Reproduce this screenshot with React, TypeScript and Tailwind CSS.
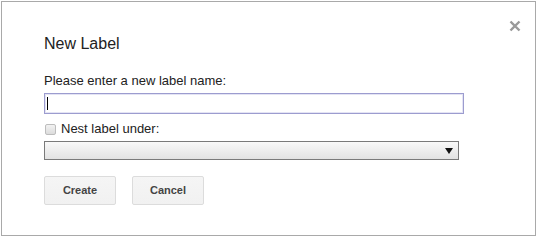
export default function App() {
  return (
    <div className="w-[538px] h-[237px] bg-white font-['Liberation_Sans',Arial,sans-serif] text-[#222]">
      <div className="relative ml-px mt-px w-[535px] h-[235px] border border-[#a9a9a9] bg-white pl-[42px] pt-[32px] flex flex-col">
        {/* close */}
        <button className="absolute right-[14px] top-[18px] w-[12px] h-[12px] flex items-center justify-center">
          <svg width="12" height="12" viewBox="0 0 12 12">
            <path d="M1.5 1.5 L10.5 10.5 M10.5 1.5 L1.5 10.5" stroke="#9a9a9a" strokeWidth="2.4" />
          </svg>
        </button>

        <div className="text-[16px] leading-[20px]">New Label</div>

        <div className="mt-[19px] text-[13px] leading-[16px]">Please enter a new label name:</div>

        <div className="mt-[4px] w-[420px] h-[21px] border border-[#9c9ccf] shadow-[inset_0_0_0_1px_#e4e4f4] flex items-center pl-[2px]">
          <span className="w-px h-[13px] bg-black" />
        </div>

        <div className="mt-[7px] flex items-center h-[16px] text-[13px] leading-[16px]">
          <span className="ml-px w-[11px] h-[11px] rounded-[2px] border border-[#bdbdbd] bg-gradient-to-b from-[#f2f2f2] to-[#dcdcdc]" />
          <span className="ml-[5px]">Nest label under:</span>
        </div>

        <div className="mt-[4px] w-[415px] h-[19px] border border-[#7a7a7a] bg-gradient-to-b from-[#f9f9f9] to-[#e2e2e2] flex items-center justify-end pr-[5px]">
          <svg width="8" height="6" viewBox="0 0 8 6">
            <path d="M0 0 H8 L4 6 Z" fill="#111" />
          </svg>
        </div>

        <div className="mt-[16px] flex gap-[16px]">
          <button className="w-[72px] h-[29px] rounded-[2px] border border-[#dcdcdc] bg-gradient-to-b from-[#f5f5f5] to-[#f1f1f1] text-[11px] font-bold text-[#444]">
            Create
          </button>
          <button className="w-[72px] h-[29px] rounded-[2px] border border-[#dcdcdc] bg-gradient-to-b from-[#f5f5f5] to-[#f1f1f1] text-[11px] font-bold text-[#444]">
            Cancel
          </button>
        </div>
      </div>
    </div>
  );
}
